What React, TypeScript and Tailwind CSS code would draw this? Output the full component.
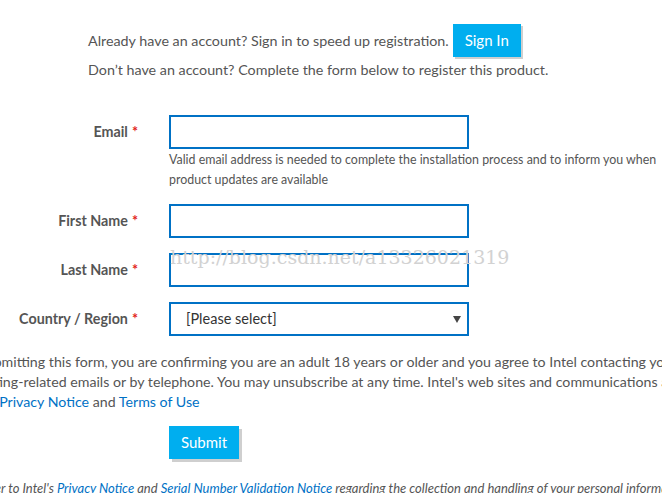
import React from "react";

const font = { fontFamily: 'Lato, "Open Sans", sans-serif' };

function Label({ text }: { text: string }) {
  return (
    <div className="w-[138px] shrink-0 text-right text-[14.3px] font-bold text-[#555] leading-[34px] whitespace-nowrap">
      {text}
      <span className="text-[#e2231a] ml-[4px]">*</span>
    </div>
  );
}

function Field({ label }: { label: string }) {
  return (
    <div className="flex items-start gap-[31px]">
      <Label text={label} />
      <input className="w-[300px] h-[34px] border-2 border-[#0071c5] bg-white outline-none" />
    </div>
  );
}

export default function App() {
  return (
    <div
      className="relative w-[662px] h-[493px] overflow-hidden bg-white text-[#555]"
      style={font}
    >
      <div className="pt-[24px]">
        <div className="flex items-center gap-[4px] pl-[88px] text-[14.3px]">
          <span>Already have an account? Sign in to speed up registration.</span>
          <button className="h-[33px] w-[68px] bg-[#00aeef] text-white text-[15px] shadow-[2px_2px_0_#cfcfcf]">
            Sign In
          </button>
        </div>
        <div className="pl-[88px] mt-[3px] text-[14.3px] leading-[20px]">
          Don’t have an account? Complete the form below to register this product.
        </div>

        <div className="mt-[35px] flex flex-col">
          <div className="flex items-start gap-[31px]">
            <Label text="Email" />
            <div>
              <input className="w-[300px] h-[34px] border-2 border-[#0071c5] bg-white outline-none" />
              <div className="mt-[1px] w-[500px] text-[12.4px] leading-[20px] text-[#555]">
                Valid email address is needed to complete the installation process and to inform you when
                product updates are available
              </div>
            </div>
          </div>
          <div className="mt-[14px] flex flex-col gap-[15px]">
            <Field label="First Name" />
            <Field label="Last Name" />
            <div className="flex items-start gap-[31px]">
              <Label text="Country / Region" />
              <div className="relative w-[300px] h-[34px] border-2 border-[#0071c5] bg-white flex items-center pl-[15px] text-[14.5px] text-[#333]">
                [Please select]
                <svg className="absolute right-[6px] top-[12px]" width="8" height="8" viewBox="0 0 8 8">
                  <path d="M0 0 L8 0 L4 7 Z" fill="#444" />
                </svg>
              </div>
            </div>
          </div>
        </div>

        <div className="mt-[16px] text-[14.2px] leading-[20px] whitespace-nowrap">
          <div className="ml-[-40px]">By submitting this form, you are confirming you are an adult 18 years or older and you agree to Intel contacting you with</div>
          <div className="ml-[-44px]">marketing-related emails or by telephone. You may unsubscribe at any time. Intel's web sites and communications are subject to</div>
          <div className="ml-[-41px]">
            Intel's <span className="text-[#0071c5]">Privacy Notice</span> and{" "}
            <span className="text-[#0071c5]">Terms of Use</span>
          </div>
        </div>

        <div className="mt-[14px] pl-[169px]">
          <button className="h-[33px] w-[70px] bg-[#00aeef] text-white text-[15px] shadow-[3px_3px_0_#cfcfcf]">
            Submit
          </button>
        </div>

        <div className="mt-[19px] ml-[-57px] text-[13px] italic leading-[20px] whitespace-nowrap">
          Please refer to Intel's <span className="text-[#0071c5]">Privacy Notice</span> and{" "}
          <span className="text-[#0071c5]">Serial Number Validation Notice</span> regarding the collection and handling of your personal information
        </div>
      </div>

      <div
        className="pointer-events-none absolute left-[170px] top-[243px] text-[19px] text-[#d2d2d2] whitespace-nowrap"
        style={{ fontFamily: '"DejaVu Serif", "Liberation Serif", serif' }}
      >
        http://blog.csdn.net/a13326021319
      </div>
    </div>
  );
}
